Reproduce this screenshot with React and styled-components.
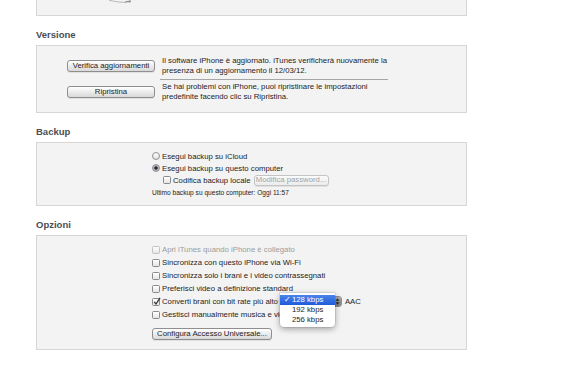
import React from "react";
import styled, { createGlobalStyle } from "styled-components";

const GlobalStyle = createGlobalStyle`
  body {
    margin: 0;
    background: #ffffff;
    font-family: "Liberation Sans", Arial, sans-serif;
    color: #1d1d1d;
  }
`;

const Page = styled.div`
  width: 431px;
  padding-left: 36px;
`;

const TopPanel = styled.div`
  position: relative;
  height: 15px;
  background: #f3f3f3;
  border: 1px solid #d6d6d6;
  border-top: none;
  svg {
    position: absolute;
    left: 72px;
    top: 0;
  }
`;

const Heading = styled.h2`
  margin: 13px 0 4px;
  font-size: 9.5px;
  line-height: 12px;
  font-weight: bold;
  color: #4a4e55;
`;

const Panel = styled.div`
  background: #f3f3f3;
  border: 1px solid #d6d6d6;
  padding: ${(p) => p.$pad};
`;

const VersionGrid = styled.div`
  display: grid;
  grid-template-columns: 88px 228px;
  column-gap: 5px;
  align-items: center;
`;

const Button = styled.button`
  width: ${(p) => p.$w}px;
  height: ${(p) => p.$h || 12}px;
  margin: ${(p) => p.$m || 0};
  padding: 0;
  font-family: inherit;
  font-size: 7.75px;
  line-height: 1;
  color: ${(p) => (p.disabled ? "#a3a3a3" : "#1d1d1d")};
  background: ${(p) =>
    p.disabled
      ? "linear-gradient(#fbfbfb, #ececec)"
      : "linear-gradient(#ffffff, #e9e9e9 55%, #d9d9d9)"};
  border: 1px solid ${(p) => (p.disabled ? "#c4c4c4" : "#8e8e8e")};
  border-radius: 3px;
  box-shadow: 0 1px 0 rgba(0, 0, 0, 0.08);
`;

const Note = styled.p`
  margin: 0;
  padding-left: 2px;
  font-size: 7.75px;
  line-height: 10px;
`;

const Divider = styled.div`
  grid-column: 2;
  height: 1px;
  margin: 3px 0 2px;
  background: #a6a6a6;
`;

const Row = styled.div`
  display: flex;
  align-items: center;
  height: ${(p) => p.$h}px;
  padding-left: ${(p) => p.$indent || 0}px;
  font-size: ${(p) => p.$fs || 7.75}px;
  color: ${(p) => (p.$disabled ? "#9b9b9b" : "#1d1d1d")};
  white-space: nowrap;
`;

const Check = styled.span`
  position: relative;
  flex: none;
  width: 6px;
  height: 6px;
  margin-right: 2px;
  border: 1px solid ${(p) => (p.$disabled ? "#c2c2c2" : "#8a8a8a")};
  border-radius: 1.5px;
  background: linear-gradient(#ffffff, #e4e4e4);
  svg {
    position: absolute;
    left: 0;
    top: -2px;
  }
`;

const Radio = styled.span`
  position: relative;
  flex: none;
  width: 6px;
  height: 6px;
  margin-right: 2px;
  border: 1px solid #8f8f8f;
  border-radius: 50%;
  background: ${(p) =>
    p.$on
      ? "radial-gradient(circle, #2b2b2b 0 1.4px, #9aa3ad 1.8px, #dfe3e8)"
      : "linear-gradient(#ffffff, #e2e2e2)"};
`;

const SelectWrap = styled.span`
  position: relative;
  display: inline-flex;
  margin-left: 2px;
`;

const SelectBox = styled.span`
  display: flex;
  justify-content: flex-end;
  width: 60px;
  height: 9px;
  border: 1px solid #8e8e8e;
  border-radius: 3px;
  background: linear-gradient(#ffffff, #e2e2e2);
`;

const Stepper = styled.span`
  display: flex;
  align-items: center;
  justify-content: center;
  width: 7px;
  background: linear-gradient(#a9a9a9, #7c7c7c);
  border-radius: 0 2px 2px 0;
`;

const Menu = styled.div`
  position: absolute;
  left: 0;
  top: -3px;
  z-index: 2;
  width: 55px;
  padding: 2px 0 1.5px;
  background: #ffffff;
  border-radius: 0 0 4px 4px;
  box-shadow: 0 2px 6px rgba(0, 0, 0, 0.35), 0 0 0 0.5px rgba(0, 0, 0, 0.15);
`;

const MenuItem = styled.div`
  position: relative;
  height: 10px;
  line-height: 10px;
  padding-left: 12px;
  font-size: 7.75px;
  color: ${(p) => (p.$selected ? "#ffffff" : "#1d1d1d")};
  background: ${(p) =>
    p.$selected ? "linear-gradient(#4b84ea, #1e5bd9)" : "transparent"};
  span {
    position: absolute;
    left: 4px;
  }
`;

const After = styled.span`
  margin-left: 3px;
`;

function Tick() {
  return (
    <svg width="8" height="9" viewBox="0 0 8 9">
      <path d="M1.2 4.8 L3 7 L7 0.8" fill="none" stroke="#333" strokeWidth="1.3" />
    </svg>
  );
}

function CheckRow({ label, checked, disabled, children }) {
  return (
    <Row $h={13} $disabled={disabled}>
      <Check $disabled={disabled}>{checked && <Tick />}</Check>
      {label}
      {children}
    </Row>
  );
}

export default function App() {
  return (
    <>
      <GlobalStyle />
      <Page>
        <TopPanel>
          <svg width="24" height="5" viewBox="0 0 24 5">
            <path d="M0 0.3 Q9 2.4 18 2.6" fill="none" stroke="#a9a9a9" strokeWidth="0.8" />
            <path d="M15 1.8 L22 0.2 L21.5 2.4 Z" fill="#8a8a8a" />
          </svg>
        </TopPanel>

        <Heading>Versione</Heading>
        <Panel $pad="10px 0 10px 30px">
          <VersionGrid>
            <Button $w={88}>Verifica aggiornamenti</Button>
            <Note>
              Il software iPhone è aggiornato. iTunes verificherà nuovamente la
              <br />
              presenza di un aggiornamento il 12/03/12.
            </Note>
            <Divider />
            <Button $w={88}>Ripristina</Button>
            <Note>
              Se hai problemi con iPhone, puoi ripristinare le impostazioni
              <br />
              predefinite facendo clic su Ripristina.
            </Note>
          </VersionGrid>
        </Panel>

        <Heading>Backup</Heading>
        <Panel $pad="7px 0 7px 115px">
          <Row $h={12}>
            <Radio />
            Esegui backup su iCloud
          </Row>
          <Row $h={12}>
            <Radio $on />
            Esegui backup su questo computer
          </Row>
          <Row $h={12} $indent={11}>
            <Check />
            Codifica backup locale
            <Button $w={75} $h={11} $m="0 0 0 3px" disabled>
              Modifica password...
            </Button>
          </Row>
          <Row $h={12} $fs={6.6}>
            Ultimo backup su questo computer: Oggi 11:57
          </Row>
        </Panel>

        <Heading>Opzioni</Heading>
        <Panel $pad="7px 0 9px 115px">
          <CheckRow label="Apri iTunes quando iPhone è collegato" disabled />
          <CheckRow label="Sincronizza con questo iPhone via Wi-Fi" />
          <CheckRow label="Sincronizza solo i brani e i video contrassegnati" />
          <CheckRow label="Preferisci video a definizione standard" />
          <CheckRow label="Converti brani con bit rate più alto" checked>
            <SelectWrap>
              <SelectBox>
                <Stepper>
                  <svg width="5" height="7" viewBox="0 0 5 7">
                    <path d="M2.5 0.5 L4.5 2.8 L0.5 2.8 Z M2.5 6.5 L4.5 4.2 L0.5 4.2 Z" fill="#222" />
                  </svg>
                </Stepper>
              </SelectBox>
              <Menu>
                <MenuItem $selected>
                  <span>✓</span>128 kbps
                </MenuItem>
                <MenuItem>192 kbps</MenuItem>
                <MenuItem>256 kbps</MenuItem>
              </Menu>
            </SelectWrap>
            <After>AAC</After>
          </CheckRow>
          <CheckRow label="Gestisci manualmente musica e video" />
          <Button $w={120} $m="7px 0 0 0">
            Configura Accesso Universale...
          </Button>
        </Panel>
      </Page>
    </>
  );
}
